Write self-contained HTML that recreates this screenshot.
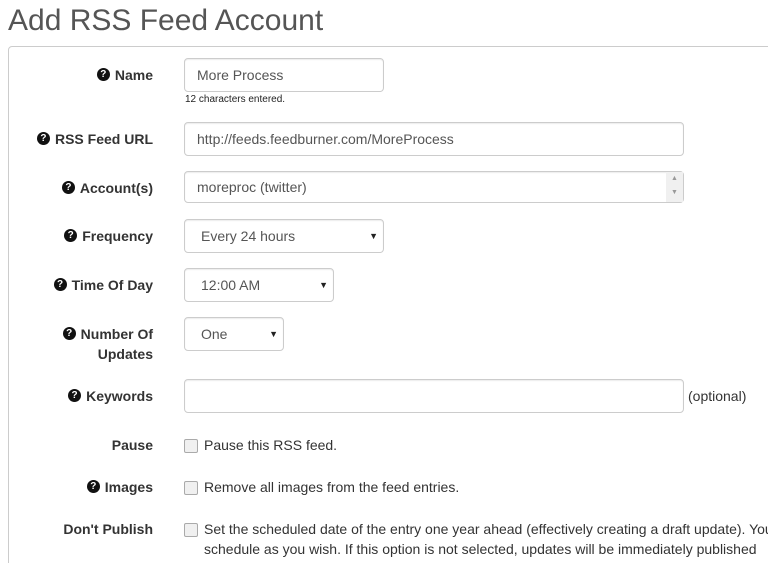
<!DOCTYPE html>
<html style="overflow:hidden"><head><style>
html,body{overflow:hidden;height:563px}
body{margin:0;width:768px;background:#fff;font-family:"Liberation Sans",Arial,sans-serif;position:relative}
.a{position:absolute}
h1{position:absolute;left:8px;top:3px;margin:0;font-size:30px;font-weight:normal;color:#555;line-height:36px}
.panel{position:absolute;left:8px;top:46px;width:780px;height:530px;border:1px solid #ccc;border-radius:4px}
.lbl{position:absolute;right:615px;font-size:14px;font-weight:bold;color:#333;text-align:right;line-height:20px;white-space:nowrap}
.q{display:inline-block;width:13px;height:13px;border-radius:50%;background:#111;color:#fff;font-size:10px;line-height:13px;text-align:center;margin-right:5px;vertical-align:top;margin-top:3px}
.inp{position:absolute;left:184px;border:1px solid #ccc;border-radius:4px;box-sizing:border-box;font-size:14px;color:#555;padding-left:12px;line-height:32px;box-shadow:inset 0 1px 1px rgba(0,0,0,.075)}
.sel .ar{position:absolute;right:5px;top:0;font-size:9px;color:#222}
.cb{position:absolute;left:184px;width:12px;height:12px;border:1px solid #aaa;border-radius:2px;background:#f0f0f0}
.t{position:absolute;left:204px;font-size:14px;color:#333;line-height:20px;white-space:nowrap}
</style></head><body>
<h1>Add RSS Feed Account</h1>
<div class="panel"></div>

<div class="lbl" style="top:65px"><span class="q">?</span>Name</div>
<div class="inp" style="top:58px;width:200px;height:34px">More Process</div>
<div class="a" style="left:185px;top:94px;font-size:10px;color:#222">12 characters entered.</div>

<div class="lbl" style="top:129px"><span class="q">?</span>RSS Feed URL</div>
<div class="inp" style="top:122px;width:500px;height:34px">http://feeds.feedburner.com/MoreProcess</div>

<div class="lbl" style="top:178px"><span class="q">?</span>Account(s)</div>
<div class="inp" style="top:171px;width:500px;height:32px;line-height:30px">moreproc (twitter)
<div class="a" style="right:0;top:0;width:17px;height:30px;background:#f0f0f0;color:#999;font-size:7px;line-height:14px;text-align:center;padding:0">▲<br>▼</div></div>

<div class="lbl" style="top:226px"><span class="q">?</span>Frequency</div>
<div class="inp sel" style="top:219px;width:200px;height:34px;padding-left:16px">Every 24 hours<span class="ar">▼</span></div>

<div class="lbl" style="top:275px"><span class="q">?</span>Time Of Day</div>
<div class="inp sel" style="top:268px;width:150px;height:34px;padding-left:16px">12:00 AM<span class="ar">▼</span></div>

<div class="lbl" style="top:324px"><span class="q">?</span>Number Of<br>Updates</div>
<div class="inp sel" style="top:317px;width:100px;height:34px;padding-left:16px">One<span class="ar">▼</span></div>

<div class="lbl" style="top:386px"><span class="q">?</span>Keywords</div>
<div class="inp" style="top:379px;width:500px;height:34px"></div>
<div class="a" style="left:688px;top:386px;font-size:14px;color:#333;line-height:20px">(optional)</div>

<div class="lbl" style="top:435px">Pause</div>
<div class="cb" style="top:439px"></div>
<div class="t" style="top:435px">Pause this RSS feed.</div>

<div class="lbl" style="top:477px"><span class="q">?</span>Images</div>
<div class="cb" style="top:481px"></div>
<div class="t" style="top:477px">Remove all images from the feed entries.</div>

<div class="lbl" style="top:519px">Don't Publish</div>
<div class="cb" style="top:523px"></div>
<div class="t" style="top:519px">Set the scheduled date of the entry one year ahead (effectively creating a draft update). You can then<br>schedule as you wish. If this option is not selected, updates will be immediately published</div>
</body></html>
